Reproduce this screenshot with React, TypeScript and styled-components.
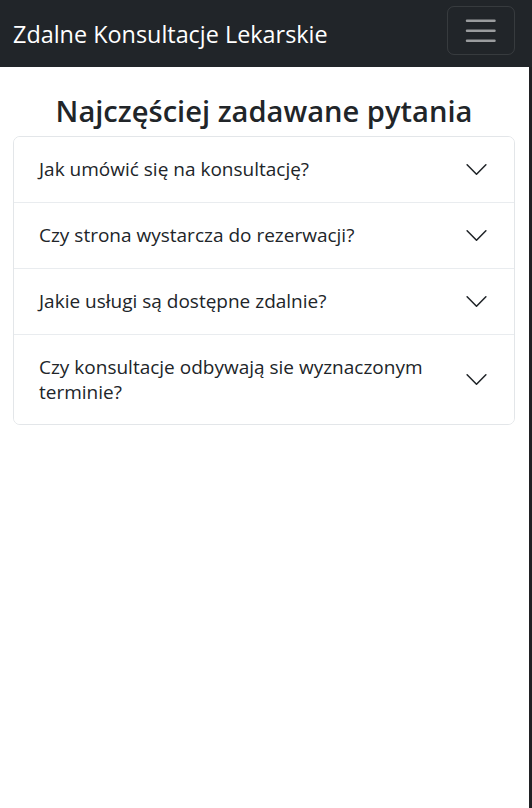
import React from "react";
import styled, { createGlobalStyle } from "styled-components";

const Global = createGlobalStyle`
  html, body { margin: 0; padding: 0; }
  html { background: #202124; }
  body {
    font-family: "Open Sans", "Noto Sans", sans-serif;
    color: #212529;
  }
  * { box-sizing: border-box; }
`;

const Page = styled.div`
  min-height: 808px;
  margin-right: 3px;
  background: #ffffff;
  display: flex;
  flex-direction: column;
`;

const Navbar = styled.nav`
  height: 67px;
  margin-right: -3px;
  background: #212529;
  display: flex;
  align-items: center;
  justify-content: space-between;
  padding: 0 17px 0 13px;
`;

const Brand = styled.a`
  color: #ffffff;
  font-size: 23.4px;
  text-decoration: none;
  white-space: nowrap;
  line-height: 30px;
`;

const Toggler = styled.button`
  width: 68px;
  height: 49px;
  margin-top: -6px;
  border: 1px solid rgba(255, 255, 255, 0.1);
  border-radius: 7px;
  background: transparent;
  display: flex;
  align-items: center;
  justify-content: center;
  padding: 0;
`;

const Main = styled.main`
  padding: 0 14px 0 13px;
`;

const Heading = styled.h1`
  margin: 24px 0 4px;
  text-align: center;
  font-size: 29.1px;
  font-weight: 600;
  line-height: 41px;
`;

const Accordion = styled.div`
  border: 1px solid #e3e6e9;
  border-radius: 7px;
  overflow: hidden;
`;

const Item = styled.div`
  & + & {
    border-top: 1px solid #e9ecef;
  }
`;

const Question = styled.button`
  width: 100%;
  display: flex;
  align-items: center;
  gap: 24px;
  padding: 20px 25px 20px 25px;
  background: #ffffff;
  border: none;
  text-align: left;
  font-family: inherit;
  font-size: 19px;
  line-height: 24.5px;
  color: #212529;
`;

const QuestionText = styled.span`
  flex: 1;
`;

const Chevron = () => (
  <svg width="25" height="25" viewBox="0 0 16 16" fill="none" stroke="#212529" strokeLinecap="round" strokeLinejoin="round" strokeWidth="1">
    <path d="M2 5L8 11L14 5" />
  </svg>
);

const questions = [
  "Jak umówić się na konsultację?",
  "Czy strona wystarcza do rezerwacji?",
  "Jakie usługi są dostępne zdalnie?",
  "Czy konsultacje odbywają sie wyznaczonym terminie?",
];

export default function App() {
  return (
    <>
      <Global />
      <Page>
        <Navbar>
          <Brand href="#">Zdalne Konsultacje Lekarskie</Brand>
          <Toggler aria-label="Menu">
            <svg width="37.5" height="37.5" viewBox="0 0 30 30">
              <path d="M4 7h22M4 15h22M4 23h22" stroke="rgba(255,255,255,0.55)" strokeWidth="2" strokeLinecap="round" />
            </svg>
          </Toggler>
        </Navbar>
        <Main>
          <Heading>Najczęściej zadawane pytania</Heading>
          <Accordion>
            {questions.map((q) => (
              <Item key={q}>
                <Question>
                  <QuestionText>{q}</QuestionText>
                  <Chevron />
                </Question>
              </Item>
            ))}
          </Accordion>
        </Main>
      </Page>
    </>
  );
}
